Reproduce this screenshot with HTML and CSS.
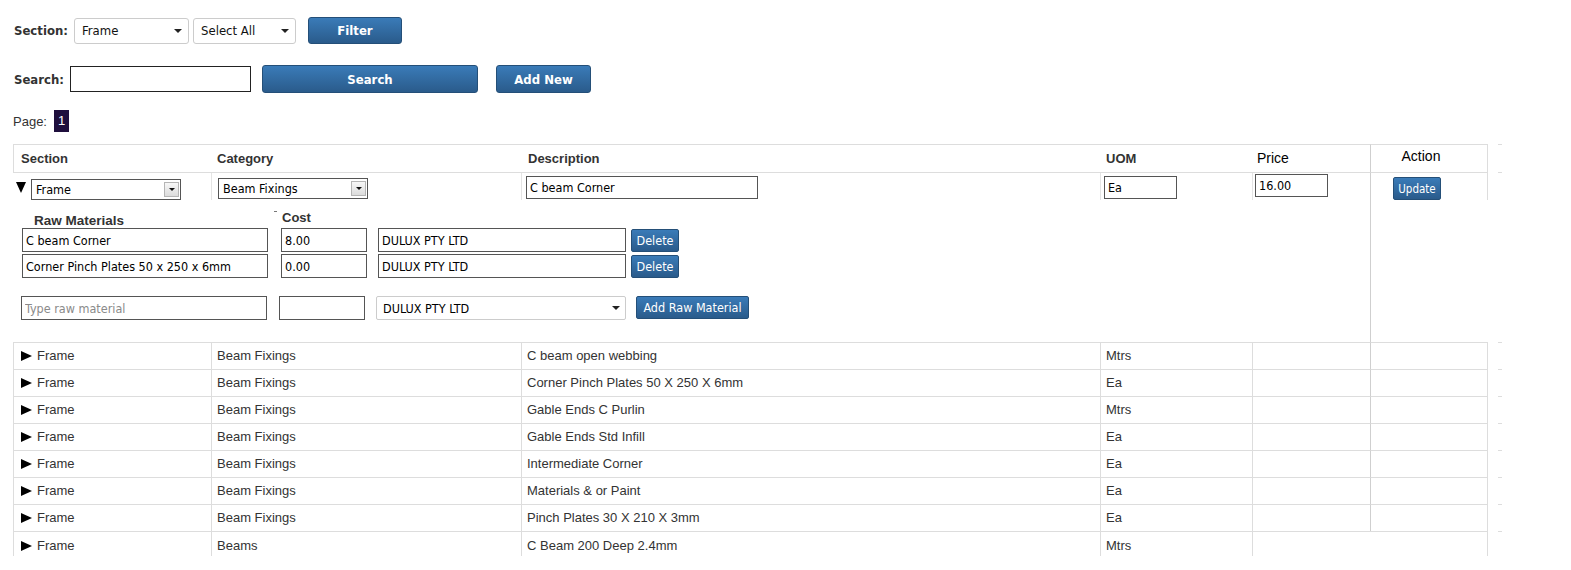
FILE: index.html
```html
<!DOCTYPE html>
<html>
<head>
<meta charset="utf-8">
<title>Products</title>
<link rel="stylesheet" href="styles.css">
</head>
<body>
<div class="page">
  <div class="toolbar">
    <span class="lbl lbl-section">Section:</span>
    <div class="pick pick-section"><select><option>Frame</option></select><span class="caret"></span></div>
    <div class="pick pick-all"><select><option>Select All</option></select><span class="caret"></span></div>
    <button class="btn btn-filter">Filter</button>
  </div>
  <div class="toolbar toolbar-search">
    <span class="lbl lbl-search">Search:</span>
    <input class="search-in" type="text">
    <button class="btn btn-search">Search</button>
    <button class="btn btn-add">Add New</button>
  </div>
  <div class="pager">
    <span class="pager-lbl">Page:</span>
    <span class="pager-num">1</span>
  </div>

  <table class="grid">
    <colgroup>
      <col class="c-sec"><col class="c-cat"><col class="c-desc"><col class="c-uom"><col class="c-price"><col class="c-act"><col class="c-tail">
    </colgroup>
    <thead>
      <tr class="head">
        <th class="h-sec">Section</th>
        <th class="h-cat">Category</th>
        <th class="h-desc">Description</th>
        <th class="h-uom">UOM</th>
        <th class="h-price">Price</th>
        <th class="h-act">Action</th>
        <td class="tail tail-head"></td>
      </tr>
    </thead>
    <tbody>
      <tr class="edit">
        <td class="e-sec"><span class="tri-down"></span><div class="oldsel oldsel-sec"><select><option>Frame</option></select><span class="dd"><span class="dd-arrow"></span></span></div></td>
        <td class="e-cat"><div class="oldsel oldsel-cat"><select><option>Beam Fixings</option></select><span class="dd"><span class="dd-arrow"></span></span></div></td>
        <td class="e-desc"><input class="fld fld-desc" type="text" value="C beam Corner"></td>
        <td class="e-uom"><input class="fld fld-uom" type="text" value="Ea"></td>
        <td class="e-price"><input class="fld fld-price" type="text" value="16.00"></td>
        <td class="e-act"><button class="btn-sm btn-update">Update</button></td>
        <td class="tail"></td>
      </tr>
      <tr class="panel">
        <td class="p-main" colspan="5">
          <div class="rm">
            <div class="rm-head"><span class="rm-title">Raw Materials</span><span class="rm-costlbl">Cost</span></div>
            <div class="rm-row">
              <input class="fld rm-name" type="text" value="C beam Corner">
              <input class="fld rm-cost" type="text" value="8.00">
              <input class="fld rm-vendor" type="text" value="DULUX PTY LTD">
              <button class="btn-sm rm-del">Delete</button>
            </div>
            <div class="rm-row">
              <input class="fld rm-name" type="text" value="Corner Pinch Plates 50 x 250 x 6mm">
              <input class="fld rm-cost" type="text" value="0.00">
              <input class="fld rm-vendor" type="text" value="DULUX PTY LTD">
              <button class="btn-sm rm-del">Delete</button>
            </div>
            <div class="rm-row rm-new">
              <input class="fld rm-name" type="text" placeholder="Type raw material">
              <input class="fld rm-cost" type="text">
              <div class="pick rm-pick"><select><option>DULUX PTY LTD</option></select><span class="caret"></span></div>
              <button class="btn-sm rm-addbtn">Add Raw Material</button>
            </div>
          </div>
        </td>
        <td class="p-act"></td>
        <td class="tail tail-none"></td>
      </tr>
      <tr class="row"><td class="d-sec"><span class="tri"></span>Frame</td><td>Beam Fixings</td><td>C beam open webbing</td><td>Mtrs</td><td></td><td class="d-act"></td><td class="tail"></td></tr>
      <tr class="row"><td class="d-sec"><span class="tri"></span>Frame</td><td>Beam Fixings</td><td>Corner Pinch Plates 50 X 250 X 6mm</td><td>Ea</td><td></td><td class="d-act"></td><td class="tail"></td></tr>
      <tr class="row"><td class="d-sec"><span class="tri"></span>Frame</td><td>Beam Fixings</td><td>Gable Ends C Purlin</td><td>Mtrs</td><td></td><td class="d-act"></td><td class="tail"></td></tr>
      <tr class="row"><td class="d-sec"><span class="tri"></span>Frame</td><td>Beam Fixings</td><td>Gable Ends Std Infill</td><td>Ea</td><td></td><td class="d-act"></td><td class="tail"></td></tr>
      <tr class="row"><td class="d-sec"><span class="tri"></span>Frame</td><td>Beam Fixings</td><td>Intermediate Corner</td><td>Ea</td><td></td><td class="d-act"></td><td class="tail"></td></tr>
      <tr class="row"><td class="d-sec"><span class="tri"></span>Frame</td><td>Beam Fixings</td><td>Materials &amp; or Paint</td><td>Ea</td><td></td><td class="d-act"></td><td class="tail"></td></tr>
      <tr class="row"><td class="d-sec"><span class="tri"></span>Frame</td><td>Beam Fixings</td><td>Pinch Plates 30 X 210 X 3mm</td><td>Ea</td><td></td><td class="d-act"></td><td class="tail"></td></tr>
      <tr class="row row-last"><td class="d-sec"><span class="tri"></span>Frame</td><td>Beams</td><td>C Beam 200 Deep 2.4mm</td><td>Mtrs</td><td class="d-merge" colspan="2"></td><td class="tail"></td></tr>
    </tbody>
  </table>
</div>
</body>
</html>
```

FILE: styles.css
```css
* { box-sizing: border-box; }
html, body { margin: 0; padding: 0; background: #fff; }
body { font-family: "Liberation Sans", Arial, sans-serif; color: #333; font-size: 13px; }

.page { padding: 17px 0 0 13px; }

/* toolbar */
.toolbar { display: flex; align-items: center; height: 27px; }
.toolbar-search { margin-top: 21px; height: 28px; }
.lbl {
  font-family: "DejaVu Sans Condensed", "DejaVu Sans", sans-serif;
  font-stretch: condensed;
  font-weight: bold; font-size: 13px; color: #333;
  padding-left: 1px;
}
.lbl-section { width: 61px; }
.lbl-search { width: 57px; }

.pick {
  display: flex; align-items: center;
  height: 26px; border: 1px solid #ccc; border-radius: 3px; background: #fff;
}
.pick select {
  flex: 1; min-width: 0; height: 100%;
  -webkit-appearance: none; appearance: none;
  border: 0; background: transparent; outline: none;
  font-family: "DejaVu Sans Condensed", "DejaVu Sans", sans-serif; font-stretch: condensed;
  font-size: 13px; color: #111; padding: 0 0 0 7px; margin: 0;
}
.caret {
  width: 0; height: 0; margin-right: 6px;
  border-left: 4px solid transparent; border-right: 4px solid transparent; border-top: 4px solid #222;
}
.pick-section { width: 115px; }
.pick-all { width: 103px; margin-left: 4px; }

.btn {
  height: 28px; padding: 0; margin: 0;
  background: linear-gradient(#3a7bb8, #2a5b8b);
  border: 1px solid #244f78; border-radius: 3px;
  color: #fff; font-family: "DejaVu Sans Condensed", "DejaVu Sans", sans-serif; font-stretch: condensed;
  font-weight: bold; font-size: 13px;
}
.btn-filter { width: 94px; height: 27px; margin-left: 12px; }
.search-in { width: 181px; height: 26px; border: 1px solid #222; margin: 0; padding: 0 3px; }
.btn-search { width: 216px; margin-left: 11px; }
.btn-add { width: 95px; margin-left: 18px; }

/* pager */
.pager { display: flex; align-items: center; height: 22px; margin-top: 17px; }
.pager-lbl { width: 41px; font-size: 13px; color: #333; }
.pager-num {
  width: 15px; height: 22px; background: #1f0f3d; color: #fff;
  font-size: 13px; line-height: 22px; text-align: center;
}

/* grid */
.grid {
  margin-top: 12px;
  border-collapse: separate; border-spacing: 0;
  table-layout: fixed; width: 1489px;
}
.c-sec { width: 198px; }
.c-cat { width: 310px; }
.c-desc { width: 579px; }
.c-uom { width: 152px; }
.c-price { width: 118px; }
.c-act { width: 118px; }
.c-tail { width: 14px; }

.head th {
  height: 29px; padding: 0;
  border-top: 1px solid #ddd; border-bottom: 1px solid #ddd;
  text-align: left; font-weight: bold; font-size: 13px; color: #333;
  font-family: "Liberation Sans", Arial, sans-serif;
}
.h-sec { border-left: 1px solid #ddd; padding-left: 7px !important; }
.h-cat { padding-left: 6px !important; }
.h-desc { padding-left: 7px !important; }
.h-uom { padding-left: 6px !important; }
.h-price {
  padding: 0 0 2px 5px !important;
  font-family: "DejaVu Sans Condensed", "DejaVu Sans", sans-serif; font-stretch: condensed;
  font-weight: normal !important; font-size: 14px !important; color: #000 !important;
}
.h-act {
  border-left: 1px solid #cfcfcf; border-right: 1px solid #ddd;
  text-align: center !important; padding: 0 16px 5px 0 !important;
  font-family: "DejaVu Sans Condensed", "DejaVu Sans", sans-serif; font-stretch: condensed;
  font-weight: normal !important; font-size: 14px !important; color: #000 !important;
}

.tail { padding: 0; border: 0; }
.tail-head {
  background:
    linear-gradient(#ddd, #ddd) 10px 0 / 4px 1px no-repeat,
    linear-gradient(#ddd, #ddd) 10px 100% / 4px 1px no-repeat;
}
.row .tail { background: linear-gradient(#ddd, #ddd) 10px 0 / 4px 1px no-repeat; }

/* edit row */
.edit td { vertical-align: top; padding: 3px 0 0 0; height: 27px; }
.edit td.tail { padding: 0; }
.e-sec { padding-left: 3px !important; display: flex; align-items: flex-start; }
.tri-down {
  width: 0; height: 0; margin-top: 6px;
  border-left: 5.5px solid transparent; border-right: 5.5px solid transparent; border-top: 11px solid #000;
}
.e-cat, .e-desc, .e-uom, .e-price { border-left: 1px solid #e4e4e4; }
.e-cat { padding-left: 6px !important; }
.e-desc { padding-left: 4px !important; }
.e-uom { padding-left: 3px !important; }
.e-price { padding-left: 2px !important; }
.e-act { border-left: 1px solid #cfcfcf; border-right: 1px solid #ddd; padding-left: 22px !important; }

.oldsel {
  display: flex; align-items: center; width: 150px; height: 21px;
  border: 1px solid #555; background: #fff;
}
.oldsel-sec { margin-left: 5px; margin-top: 3px; }
.oldsel-cat { margin-top: 2px; }
.oldsel select {
  flex: 1; min-width: 0; height: 100%;
  -webkit-appearance: none; appearance: none;
  border: 0; background: transparent; outline: none; margin: 0;
  font-family: "DejaVu Sans Condensed", "DejaVu Sans", sans-serif; font-stretch: condensed;
  font-size: 12.5px; color: #000; padding: 0 0 0 4px;
}
.dd {
  width: 15px; height: 15px; margin-right: 1px;
  border: 1px solid #b5b5b5; background: linear-gradient(#f7f7f7, #dcdcdc);
  display: flex; align-items: center; justify-content: center;
}
.dd-arrow {
  width: 0; height: 0;
  border-left: 3px solid transparent; border-right: 3px solid transparent; border-top: 3px solid #111;
}

.fld {
  height: 24px; margin: 0; padding: 0 3px;
  border: 1px solid #555; background: #fff; outline: none;
  font-family: "DejaVu Sans Condensed", "DejaVu Sans", sans-serif; font-stretch: condensed;
  font-size: 12.5px; color: #000;
}
.fld::placeholder { color: #8a8a8a; }
.fld-desc { width: 232px; height: 23px; }
.fld-uom { width: 73px; height: 23px; }
.fld-price { width: 73px; height: 23px; margin-top: -2px; }

.btn-sm {
  height: 23px; padding: 0 6px; margin: 0;
  background: linear-gradient(#3a7bb8, #2a5b8b);
  border: 1px solid #244f78; border-radius: 2px;
  color: #fff; font-family: "DejaVu Sans Condensed", "DejaVu Sans", sans-serif; font-stretch: condensed;
  font-size: 12.5px;
}
.btn-update { width: 48px; padding: 0; font-size: 11.5px; margin-top: 1px; }

/* raw materials panel */
.panel td { padding: 0; }
.p-main { height: 142px; vertical-align: top; padding: 10px 0 0 8px !important; }
.p-act { border-left: 1px solid #cfcfcf; }
.rm-head { display: flex; align-items: flex-start; height: 18px; }
.rm-title { width: 248px; margin-left: 13px; padding-top: 3px; font-weight: bold; font-size: 13.5px; color: #333; }
.rm-costlbl { font-weight: bold; font-size: 13px; color: #333; }
.rm-costlbl::before {
  content: ""; display: inline-block; width: 3px; height: 1px; background: #777;
  vertical-align: top; margin: 1px 5px 0 -8px;
}
.rm-row { display: flex; align-items: flex-start; margin-left: 1px; }
.rm-row + .rm-row { margin-top: 2px; }
.rm-name { width: 246px; }
.rm-cost { width: 86px; margin-left: 13px; }
.rm-vendor { width: 248px; margin-left: 11px; }
.rm-del { width: 48px; padding: 0; margin-left: 5px; margin-top: 1px; }
.rm-row.rm-new { margin-top: 18px; margin-left: 0; }
.rm-new .rm-cost { margin-left: 12px; }
.rm-pick { width: 250px; height: 24px; margin-left: 11px; border-radius: 2px; }
.rm-pick select { font-size: 12.5px; padding-left: 6px; color: #000; }
.rm-pick .caret { margin-right: 5px; }
.rm-addbtn { width: 113px; padding: 0; margin-left: 10px; }

/* data rows */
.row td {
  padding: 0 0 0 5px; line-height: 26px; height: 27px;
  border-top: 1px solid #ddd; border-left: 1px solid #ddd;
  font-size: 13px; color: #333; white-space: nowrap; overflow: hidden;
  vertical-align: top;
}
.row td.tail { border: 0; padding: 0; }
.row .d-sec { padding-left: 7px; }
.row .d-act { border-left-color: #cfcfcf; border-right: 1px solid #ddd; }
.row .d-merge { border-right: 1px solid #ddd; }
.tri {
  display: inline-block; width: 0; height: 0; vertical-align: -1px; margin-right: 5px;
  border-top: 5px solid transparent; border-bottom: 5px solid transparent; border-left: 11px solid #000;
}
.row-last td { height: 22px; line-height: 21px; padding-top: 3px; }
.row-last td.tail { padding: 0; }
.row-last .d-sec { padding-left: 7px; }
```
